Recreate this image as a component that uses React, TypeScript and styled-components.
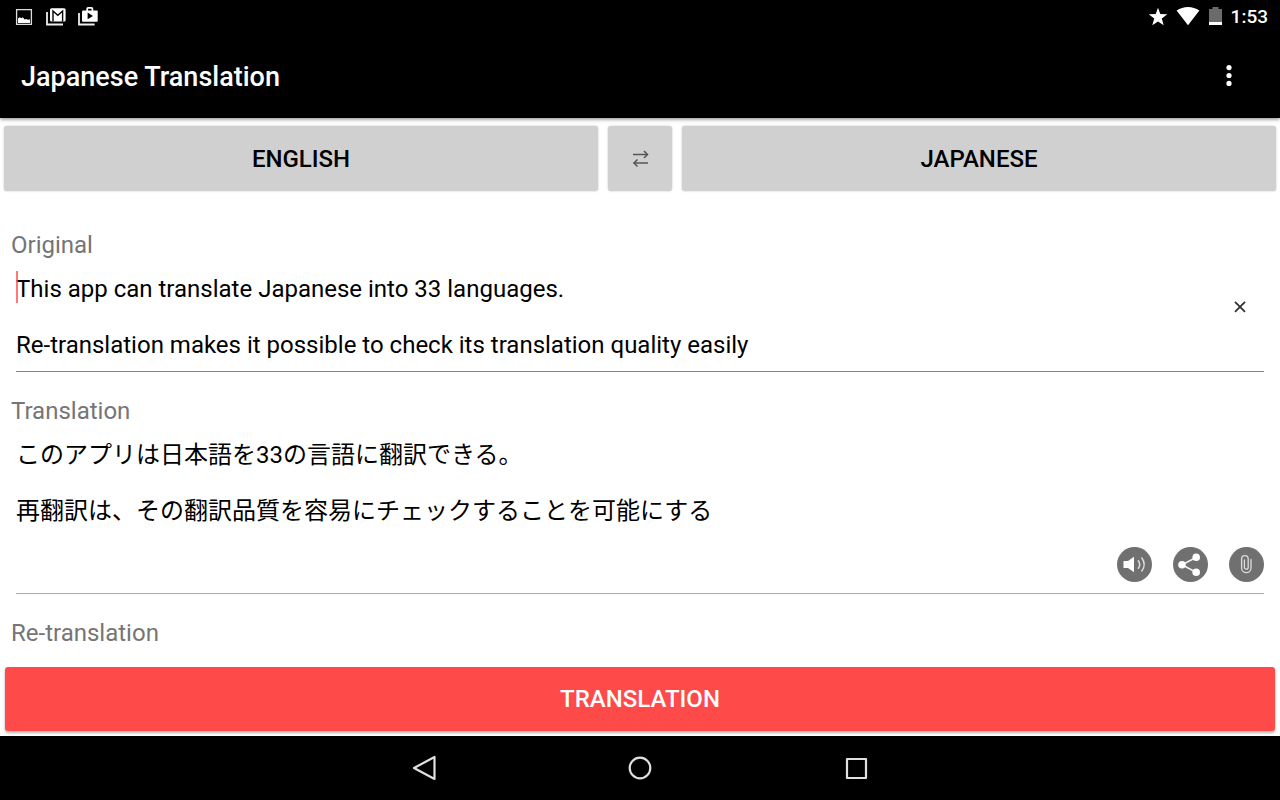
import React, { useState } from "react";
import styled, { createGlobalStyle } from "styled-components";

const GlobalStyle = createGlobalStyle`
  *, *::before, *::after { box-sizing: border-box; }
  body {
    margin: 0;
    background: #fff;
    color: #000;
    font-family: Roboto, "Noto Sans CJK JP", sans-serif;
    font-size: 24px;
    line-height: 28px;
  }
  button, textarea { font: inherit; color: inherit; }
  svg { display: block; }
`;

const Screen = styled.div`
  min-height: 100vh;
  display: flex;
  flex-direction: column;
`;

const TopBar = styled.header`
  position: relative;
  background: #000;
  color: #fff;
  box-shadow: 0 1px 4px rgba(0, 0, 0, 0.5);
`;

const StatusBar = styled.div`
  display: flex;
  justify-content: space-between;
  align-items: center;
  height: 34px;
  padding: 0 12px;
`;

const StatusGroup = styled.div<{ $gap: number }>`
  display: flex;
  align-items: center;
  gap: ${(p) => p.$gap}px;
`;

const Clock = styled.time`
  font-size: 19px;
  line-height: 24px;
  font-weight: 500;
`;

const AppBar = styled.div`
  display: flex;
  justify-content: space-between;
  align-items: center;
  height: 84px;
  padding: 0 31px 0 21px;
`;

const Title = styled.h1`
  margin: 0;
  padding-top: 2px;
  font-size: 27px;
  line-height: 32px;
  font-weight: 500;
`;

const IconButton = styled.button`
  display: flex;
  align-items: center;
  justify-content: center;
  width: 40px;
  height: 48px;
  padding: 0;
  border: 0;
  background: none;
  cursor: pointer;
`;

const LanguageBar = styled.div`
  display: grid;
  grid-template-columns: 1fr 64px 1fr;
  gap: 10px;
  padding: 8px 4px 0;
`;

const LanguageButton = styled.button`
  display: flex;
  align-items: center;
  justify-content: center;
  height: 65px;
  padding: 0;
  border: 0;
  border-radius: 3px;
  background: #d0d0d0;
  box-shadow: 0 0 2px rgba(0, 0, 0, 0.25);
  font-weight: 500;
  text-transform: uppercase;
  cursor: pointer;
`;

const Content = styled.main`
  flex: 1;
  display: flex;
  flex-direction: column;
  gap: 25px;
  padding-top: 40px;
`;

const Section = styled.section`
  display: flex;
  flex-direction: column;
  gap: 12px;
`;

const Label = styled.label`
  padding: 0 11px;
  color: #757575;
`;

const SectionTitle = styled.h2`
  margin: 0;
  padding: 0 11px;
  color: #757575;
  font-size: 24px;
  line-height: 28px;
  font-weight: 400;
`;

const Field = styled.div<{ $active?: boolean }>`
  position: relative;
  margin: 0 16px;
  padding: 4px 0 11px;
  border-bottom: 1px solid ${(p) => (p.$active ? "#f8544f" : "#acacac")};
`;

const FieldRow = styled.div`
  display: flex;
  align-items: flex-start;
  min-height: 85px;
`;

const TextBox = styled.textarea`
  display: block;
  flex: 1;
  width: 100%;
  height: 84px;
  padding: 0;
  border: 0;
  outline: 0;
  resize: none;
  overflow: hidden;
  background: none;
`;

const Caret = styled.span`
  position: absolute;
  left: 0;
  top: 0;
  width: 2px;
  height: 32px;
  background: #ff4a4a;
  opacity: 0.75;
`;

const ClearButton = styled(IconButton)`
  width: 48px;
  height: 64px;
`;

const Actions = styled.div`
  display: flex;
  justify-content: flex-end;
  gap: 21px;
  padding-top: 22px;
`;

const RoundButton = styled.button`
  display: flex;
  align-items: center;
  justify-content: center;
  width: 35px;
  height: 35px;
  padding: 0;
  border: 0;
  border-radius: 50%;
  background: #707070;
  cursor: pointer;
`;

const SubmitArea = styled.div`
  display: flex;
  padding: 20px 5px 5px;
`;

const SubmitButton = styled.button`
  flex: 1;
  height: 64px;
  border: 0;
  border-radius: 3px;
  background: #ff4a4a;
  color: #fff;
  box-shadow: 0 2px 3px rgba(0, 0, 0, 0.3);
  font-weight: 500;
  text-transform: uppercase;
  cursor: pointer;
`;

const NavBar = styled.nav`
  position: relative;
  display: flex;
  justify-content: center;
  gap: 176px;
  height: 64px;
  padding: 8px 0;
  background: #000;
`;

const ImageIcon = () => (
  <svg width="24" height="20" viewBox="0 0 24 20" aria-hidden="true">
    <path d="M4.600 2.600h14.800v14.800H4.600z" fill="none" stroke="#ddd" strokeWidth="1.300" />
    <path d="M6 16v-4.500l1.500-1.300 1.800 1 1.500-1 1.800 2.200 1.500-.5 1.800.8 2-.5.100 3.800z" fill="#fff" />
  </svg>
);

const MailIcon = () => (
  <svg width="24" height="20" viewBox="0 0 24 20" aria-hidden="true">
    <path d="M3 5v12.500h16" fill="none" stroke="#eee" strokeWidth="1.800" />
    <rect x="6" y="1.200" width="15.600" height="13.400" rx="1.500" fill="#fff" />
    <path d="M9 14.400V4l4.800 4.200L18.600 4v10.400" fill="none" stroke="#000" strokeWidth="1.400" />
  </svg>
);

const StoreIcon = () => (
  <svg width="24" height="20" viewBox="0 0 24 20" aria-hidden="true">
    <path d="M3 6v11.500h15.600" fill="none" stroke="#eee" strokeWidth="1.800" />
    <path d="M11.200 4V1.800q0-.9.900-.9h3.400q.9 0 .9.900V4" fill="none" stroke="#fff" strokeWidth="1.700" />
    <rect x="6" y="3.400" width="15.700" height="11.400" rx="1" fill="#fff" />
    <path d="M11.600 5.600v6.600l5.400-3.300z" fill="#000" />
  </svg>
);

const StarIcon = () => (
  <svg width="18" height="20" viewBox="1 0 18 20" aria-hidden="true">
    <path d="M10 .8l2.300 6.200 6.800.3-5.300 4.200 1.900 6.800L10 14.500l-5.700 3.800 1.900-6.800L.9 7.300l6.800-.3z" fill="#fff" />
  </svg>
);

const WifiIcon = () => (
  <svg width="24" height="20" viewBox="0 0 24 20" aria-hidden="true">
    <path d="M12 18.200L.6 3.600Q5.800.100 12 .100T23.400 3.600z" fill="#fff" />
  </svg>
);

const BatteryIcon = () => (
  <svg width="13" height="20" viewBox="0 0 13 20" aria-hidden="true">
    <path d="M3.500 0h6v2H13v13H0V2h3.500z" fill="#6b6b6b" />
    <path d="M0 15h13v3H0z" fill="#fff" />
  </svg>
);

const MoreIcon = () => (
  <svg width="8" height="24" viewBox="0 0 8 24" fill="#fff" aria-hidden="true">
    <circle cx="4" cy="3.600" r="2.600" />
    <circle cx="4" cy="11.500" r="2.600" />
    <circle cx="4" cy="19.400" r="2.600" />
  </svg>
);

const SwapIcon = () => (
  <svg width="18" height="20" viewBox="0 0 18 20" fill="none" stroke="#555" aria-hidden="true">
    <path d="M2 5.500h14M2.500 14h14.500" strokeWidth="1.400" />
    <path d="M13 2l3.500 3.500L13 9M6.500 10.500L3 14l3.500 3.500" strokeWidth="1.500" />
  </svg>
);

const ClearIcon = () => (
  <svg width="12" height="12" viewBox="0 0 12 12" aria-hidden="true">
    <path d="M1 .8l10 10M11 .8l-10 10" stroke="#333" strokeWidth="1.800" />
  </svg>
);

const SpeakerIcon = () => (
  <svg width="35" height="35" viewBox="0 0 35 35" aria-hidden="true">
    <path d="M6.500 14h4.500l6-4.300v15.500L11 21H6.500z" fill="#fff" />
    <path d="M21 13.200q3.400 4.300 0 8.600M24.500 10.500q5.400 7 0 14" fill="none" stroke="#ddd" strokeWidth="1.500" />
  </svg>
);

const ShareIcon = () => (
  <svg width="35" height="35" viewBox="0 0 35 35" aria-hidden="true">
    <path d="M23 10.500L9 17.800l14 7.400" fill="none" stroke="#eee" strokeWidth="1.600" />
    <g fill="#fff">
      <circle cx="23.200" cy="10.300" r="3.800" />
      <circle cx="9" cy="17.800" r="3.800" />
      <circle cx="23.200" cy="25.300" r="3.800" />
    </g>
  </svg>
);

const ClipIcon = () => (
  <svg width="35" height="35" viewBox="0 0 35 35" aria-hidden="true">
    <path
      d="M22 12.500v8.500a4.700 4.700 0 0 1-9.400 0v-9a3.300 3.300 0 0 1 6.600 0v8.300a1.900 1.900 0 0 1-3.800 0v-7.500"
      fill="none"
      stroke="#ddd"
      strokeWidth="1.300"
      strokeLinecap="round"
    />
  </svg>
);

const NavIcon = ({ children }: { children: React.ReactNode }) => (
  <svg width="28" height="28" viewBox="0 0 28 28" fill="none" stroke="#e0e0e0" strokeWidth="2.200" strokeLinejoin="round" aria-hidden="true">
    {children}
  </svg>
);

export default function App() {
  const [text, setText] = useState(
    "This app can translate Japanese into 33 languages.\n\nRe-translation makes it possible to check its translation quality easily"
  );
  const translated =
    "このアプリは日本語を33の言語に翻訳できる。\n\n再翻訳は、その翻訳品質を容易にチェックすることを可能にする";

  return (
    <Screen>
      <GlobalStyle />
      <TopBar>
        <StatusBar>
          <StatusGroup $gap={8}>
            <ImageIcon />
            <MailIcon />
            <StoreIcon />
          </StatusGroup>
          <StatusGroup $gap={9}>
            <StarIcon />
            <WifiIcon />
            <BatteryIcon />
            <Clock>1:53</Clock>
          </StatusGroup>
        </StatusBar>
        <AppBar>
          <Title>Japanese Translation</Title>
          <IconButton type="button" aria-label="More options">
            <MoreIcon />
          </IconButton>
        </AppBar>
      </TopBar>

      <LanguageBar>
        <LanguageButton type="button">English</LanguageButton>
        <LanguageButton type="button" aria-label="Swap languages">
          <SwapIcon />
        </LanguageButton>
        <LanguageButton type="button">Japanese</LanguageButton>
      </LanguageBar>

      <Content>
        <Section>
          <Label htmlFor="original">Original</Label>
          <Field $active>
            <FieldRow>
              <TextBox id="original" lang="en" spellCheck={false} value={text} onChange={(e) => setText(e.target.value)} />
              <ClearButton type="button" aria-label="Clear text" onClick={() => setText("")}>
                <ClearIcon />
              </ClearButton>
            </FieldRow>
            <Caret />
          </Field>
        </Section>
        <Section>
          <Label htmlFor="translation">Translation</Label>
          <Field>
            <TextBox id="translation" lang="ja" readOnly value={translated} />
            <Actions>
              <RoundButton type="button" aria-label="Listen">
                <SpeakerIcon />
              </RoundButton>
              <RoundButton type="button" aria-label="Share">
                <ShareIcon />
              </RoundButton>
              <RoundButton type="button" aria-label="Copy">
                <ClipIcon />
              </RoundButton>
            </Actions>
          </Field>
        </Section>
        <Section>
          <SectionTitle>Re-translation</SectionTitle>
        </Section>
      </Content>

      <SubmitArea>
        <SubmitButton type="button">Translation</SubmitButton>
      </SubmitArea>

      <NavBar>
        <IconButton type="button" aria-label="Back">
          <NavIcon>
            <path d="M24.500 3v22L4 14z" />
          </NavIcon>
        </IconButton>
        <IconButton type="button" aria-label="Home">
          <NavIcon>
            <circle cx="14" cy="14" r="10.300" />
          </NavIcon>
        </IconButton>
        <IconButton type="button" aria-label="Recent apps">
          <NavIcon>
            <path d="M5 5h19v19H5z" />
          </NavIcon>
        </IconButton>
      </NavBar>
    </Screen>
  );
}
